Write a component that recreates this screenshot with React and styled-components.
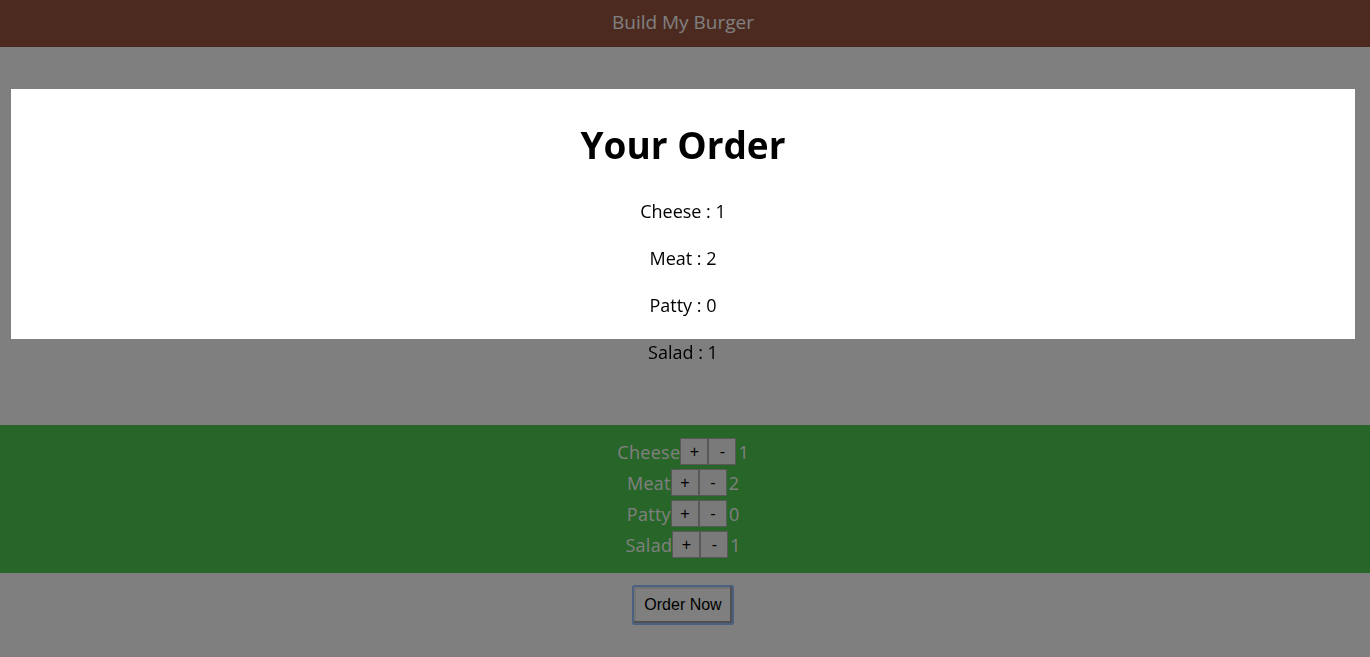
import React from 'react';
import styled, { createGlobalStyle } from 'styled-components';

const ingredients = [
  { name: 'Cheese', count: 1 },
  { name: 'Meat', count: 2 },
  { name: 'Patty', count: 0 },
  { name: 'Salad', count: 1 },
];

const GlobalStyle = createGlobalStyle`
  body {
    margin: 0;
    background: #ffffff;
    font-family: "Open Sans", "Noto Sans", sans-serif;
  }
`;

const App = () => {
  return (
    <>
      <GlobalStyle />
      <Header>Build My Burger</Header>
      <BurgerArea />
      <Controls>
        {ingredients.map(item => (
          <Row key={item.name}>
            <Label>{item.name}</Label>
            <SmallButton>+</SmallButton>
            <SmallButton>-</SmallButton>
            <Count>{item.count}</Count>
          </Row>
        ))}
      </Controls>
      <OrderBar>
        <OrderButton>Order Now</OrderButton>
      </OrderBar>
      <Backdrop />
      <Modal>
        <Title>Your Order</Title>
        {ingredients.map(item => (
          <Item key={item.name}>
            {item.name} : {item.count}
          </Item>
        ))}
      </Modal>
    </>
  );
};

const Header = styled.header`
  height: 47px;
  box-sizing: border-box;
  display: flex;
  align-items: center;
  justify-content: center;
  padding: 0 4px 3px 0;
  background: #98553f;
  color: #ffffff;
  font-size: 19px;
`;

const BurgerArea = styled.div`
  height: 378px;
`;

const Controls = styled.div`
  background: #4ecc50;
  padding: 11px 4px 13px 0;
  display: flex;
  flex-direction: column;
  align-items: center;
`;

const Row = styled.div`
  display: flex;
  align-items: center;
  height: 31px;
`;

const Label = styled.span`
  color: #ffffff;
  font-size: 18px;
  letter-spacing: 0.3px;
`;

const SmallButton = styled.button`
  width: 28px;
  height: 27px;
  padding: 0;
  margin: 0;
  background: #f4f4f4;
  border: 1.5px solid #b0b0b0;
  font-family: "Liberation Sans", Arial, sans-serif;
  font-size: 16px;
  color: #000;
`;

const Count = styled.span`
  color: #ffffff;
  font-size: 18px;
  margin-left: 2px;
`;

const OrderBar = styled.div`
  display: flex;
  justify-content: center;
  padding: 12px 4px 12px 0;
`;

const OrderButton = styled.button`
  width: 102px;
  height: 40px;
  background: #ffffff;
  border: 2px solid #98c2ff;
  box-shadow: inset -2px -2px 0 #a0a0a0, inset 2px 2px 0 #e8e8e8;
  border-radius: 2px;
  font-family: "Liberation Sans", Arial, sans-serif;
  font-size: 16px;
  color: #000;
`;

const Backdrop = styled.div`
  position: fixed;
  inset: 0;
  background: rgba(0, 0, 0, 0.5);
  z-index: 100;
`;

const Modal = styled.div`
  position: fixed;
  top: 89px;
  left: 11px;
  right: 15px;
  height: 249px;
  background: #ffffff;
  z-index: 200;
  text-align: center;
  padding-top: 1px;
`;

const Title = styled.h1`
  margin: 28px 0 27px;
  font-size: 37px;
  line-height: 54px;
  font-weight: 700;
  color: #000;
`;

const Item = styled.p`
  margin: 0 0 23px;
  font-size: 18px;
  line-height: 24px;
  color: #000;
`;

export default App;
